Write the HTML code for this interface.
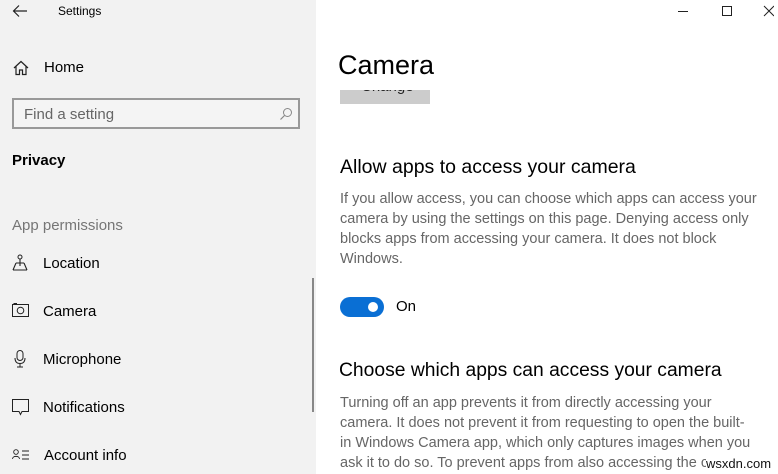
<!DOCTYPE html>
<html><head><meta charset="utf-8">
<style>
*{margin:0;padding:0;box-sizing:border-box}
body{width:778px;height:474px;overflow:hidden;background:#fff;font-family:"Segoe UI","Liberation Sans",sans-serif;color:#000;position:relative}
.side{position:absolute;left:0;top:0;width:316px;height:474px;background:#f2f2f2}
.t{position:absolute;white-space:nowrap}
svg{position:absolute}
.p{color:#666;font-size:14.5px;line-height:20px;left:340px}
</style></head><body>
<div class="side">
<svg style="left:12px;top:4px" width="16" height="14" viewBox="0 0 16 14"><path d="M15 7H2M7 1.5L1.5 7 7 12.5" fill="none" stroke="#222" stroke-width="1.2"/></svg>
<div class="t" style="left:58px;top:4px;font-size:12px">Settings</div>
<svg style="left:13px;top:60px" width="16" height="16" viewBox="0 0 16 16"><path d="M1 8L8 1.5 15 8M3 6.5V14.5H6.5V10H9.5V14.5H13V6.5" fill="none" stroke="#222" stroke-width="1.2"/></svg>
<div class="t" style="left:44px;top:59px;font-size:15px">Home</div>
<div style="position:absolute;left:12px;top:98px;width:288px;height:31px;border:2px solid #999;background:#f4f4f4"></div>
<div class="t" style="left:24px;top:106px;font-size:15px;color:#666">Find a setting</div>
<svg style="left:279px;top:107px" width="14" height="14" viewBox="0 0 14 14"><circle cx="8.5" cy="5.5" r="4" fill="none" stroke="#888" stroke-width="1"/><path d="M5.5 8.5L1.5 12.5" stroke="#888" stroke-width="1.2"/></svg>
<div class="t" style="left:12px;top:152px;font-size:15px;font-weight:bold">Privacy</div>
<div class="t" style="left:12px;top:217px;font-size:15px;color:#767676">App permissions</div>
<svg style="left:12px;top:254px" width="16" height="18" viewBox="0 0 16 18"><circle cx="8" cy="3" r="2" fill="none" stroke="#222"/><path d="M8 5V12M4 9H12M1 16L4 9M15 16L12 9M1 16H15" fill="none" stroke="#222" stroke-width="1.1"/></svg>
<div class="t" style="left:43px;top:255px;font-size:15px">Location</div>
<svg style="left:12px;top:303px" width="17" height="14" viewBox="0 0 17 14"><rect x="0.5" y="1.5" width="16" height="12" fill="none" stroke="#222"/><circle cx="8.5" cy="7.5" r="3.3" fill="none" stroke="#222"/><path d="M2 1.5V0.5H5" stroke="#222" fill="none"/></svg>
<div class="t" style="left:43px;top:303px;font-size:15px">Camera</div>
<svg style="left:14px;top:350px" width="12" height="18" viewBox="0 0 12 18"><rect x="3" y="0.5" width="6" height="10" rx="3" fill="none" stroke="#222"/><path d="M1 8C1 12 3 13.5 6 13.5S11 12 11 8M6 13.5V17M3 17H9" fill="none" stroke="#222"/></svg>
<div class="t" style="left:43px;top:351px;font-size:15px">Microphone</div>
<svg style="left:12px;top:399px" width="17" height="18" viewBox="0 0 17 18"><path d="M0.5 0.5H16.5V12.5H10L8.5 15.5 7 12.5H0.5Z" fill="none" stroke="#222"/></svg>
<div class="t" style="left:43px;top:399px;font-size:15px">Notifications</div>
<svg style="left:12px;top:449px" width="18" height="12" viewBox="0 0 18 12"><circle cx="4" cy="3" r="2.3" fill="none" stroke="#222" stroke-width=".9"/><path d="M0.5 10C0.5 6.5 7.5 6.5 7.5 10M10 2H17M10 6H17M10 10H17" fill="none" stroke="#222" stroke-width=".9"/></svg>
<div class="t" style="left:44px;top:447px;font-size:15px">Account info</div>
<div style="position:absolute;left:312px;top:278px;width:2px;height:134px;background:#888"></div>
</div>
<svg style="left:674px;top:4px" width="100" height="14" viewBox="0 0 100 14"><path d="M4 7.5H14" stroke="#222"/><rect x="48.5" y="2.5" width="9" height="9" fill="none" stroke="#222"/><path d="M90 2L100 12M100 2L90 12" stroke="#222"/></svg>
<div class="t" style="left:338px;top:50px;font-size:27px;font-weight:300">Camera</div>
<div style="position:absolute;left:340px;top:90px;width:90px;height:14px;background:#ccc;overflow:hidden"><div class="t" style="left:21px;top:-12px;font-size:15px;color:#222">Change</div></div>
<div class="t" style="left:340px;top:156px;font-size:19.5px">Allow apps to access your camera</div>
<div class="t p" style="top:189px">If you allow access, you can choose which apps can access your<br>camera by using the settings on this page. Denying access only<br>blocks apps from accessing your camera. It does not block<br>Windows.</div>
<div style="position:absolute;left:340px;top:297px;width:44px;height:20px;border-radius:10px;background:#0a6fd4"></div>
<div style="position:absolute;left:368px;top:302px;width:10px;height:10px;border-radius:5px;background:#fff"></div>
<div class="t" style="left:396px;top:298px;font-size:15px">On</div>
<div class="t" style="left:339px;top:360px;font-size:19.3px">Choose which apps can access your camera</div>
<div class="t p" style="top:393px">Turning off an app prevents it from directly accessing your<br>camera. It does not prevent it from requesting to open the built-<br>in Windows Camera app, which only captures images when you<br>ask it to do so. To prevent apps from also accessing the camera</div>
<div class="t" style="left:706px;top:456px;font-size:13px;color:#111;background:#fff">wsxdn.com</div>
</body></html>
